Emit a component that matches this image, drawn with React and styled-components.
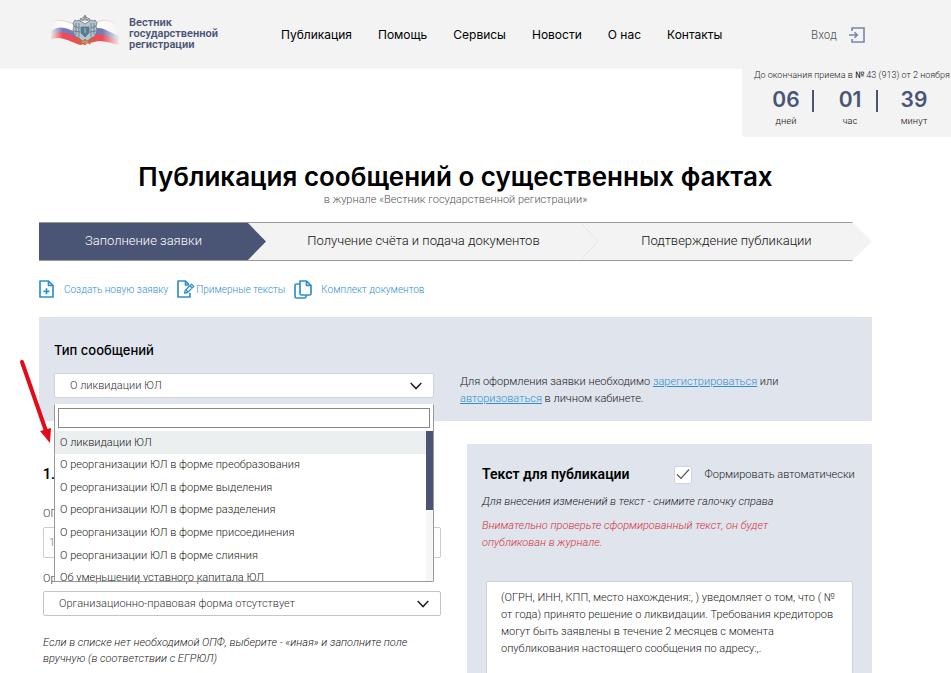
import React from 'react';
import styled, { createGlobalStyle, css } from 'styled-components';

const sans = 'Roboto, "Liberation Sans", sans-serif';
const inter = 'Inter, "Liberation Sans", sans-serif';
const navy = '#4a5475';
const blue = '#2f8fce';
const panel = '#dfe4ed';

const GlobalStyle = createGlobalStyle`
  *, *::before, *::after { box-sizing: border-box; }
  body {
    margin: 0;
    background: #fff;
    color: #222;
    font: 300 11px/17px ${sans};
    overflow: hidden;
  }
  h1, h2, p, ul { margin: 0; padding: 0; }
  button, input, select, textarea { font: inherit; color: inherit; }
`;

const Page = styled.div`
  position: relative;
`;

const Header = styled.header`
  display: flex;
  align-items: center;
  height: 69px;
  padding: 0 86px 2px 50px;
  background: #f3f3f3;
`;

const Brand = styled.a`
  display: flex;
  align-items: center;
  gap: 9px;
  width: 231px;
  color: ${navy};
  font: 600 11px/11px ${sans};
  text-decoration: none;

  > svg { margin-bottom: 4px; }
`;

const BrandName = styled.span`
  width: 96px;
`;

const Nav = styled.nav`
  display: flex;
  gap: 26px;
  padding-top: 2px;
`;

const NavLink = styled.a`
  color: #000;
  font: 400 12px/20px ${inter};
  text-decoration: none;
`;

const Login = styled.a`
  display: flex;
  align-items: center;
  gap: 12px;
  margin-left: auto;
  padding-top: 2px;
  color: #555;
  font: 300 11px/16px ${inter};
  text-decoration: none;
`;

const Countdown = styled.aside`
  width: 209px;
  height: 68px;
  margin-left: auto;
  padding-left: 12px;
  border-radius: 0 0 0 4px;
  background: #f3f3f3;
  font-size: 9px;
  line-height: 12px;
  white-space: nowrap;
`;

const Units = styled.div`
  display: flex;
  margin-top: 8px;
`;

const Unit = styled.div`
  flex: 0 0 64px;
  position: relative;
  text-align: center;
  font: 300 9px/14px ${inter};

  & + &::before {
    content: '';
    position: absolute;
    left: -6px;
    top: 1px;
    width: 2px;
    height: 22px;
    background: ${navy};
  }
`;

const UnitValue = styled.strong`
  display: block;
  margin-bottom: 3px;
  color: ${navy};
  font: 600 21px/22px ${inter};
`;

const Main = styled.main`
  padding: 24px 79px 0 39px;
`;

const Title = styled.h1`
  color: #000;
  text-align: center;
  font: 600 26px/32px ${inter};
  white-space: nowrap;
`;

const Subtitle = styled.p`
  color: #555;
  text-align: center;
  line-height: 14px;
`;

const Steps = styled.div`
  display: flex;
  height: 39px;
  margin-top: 15px;
  border: solid #999;
  border-width: 1px 0;
  background: #f3f3f3;
  clip-path: polygon(0 0, calc(100% - 20px) 0, 100% 50%, calc(100% - 20px) 100%, 0 100%);
`;

const Step = styled.button`
  display: flex;
  align-items: center;
  justify-content: center;
  position: relative;
  flex: ${(p) => p.$share} 1 0;
  padding: 0 18px 1px 0;
  border: 0;
  background: none;
  color: #111;
  font: 300 13px/20px ${sans};
  ${(p) =>
    p.$active &&
    css`
      background: ${navy};
      color: #fff;
      clip-path: polygon(0 0, calc(100% - 18px) 0, 100% 50%, calc(100% - 18px) 100%, 0 100%);
    `}
`;

const StepEdge = styled.svg`
  position: absolute;
  right: 0;
  top: 0;
`;

const Actions = styled.div`
  display: flex;
  align-items: center;
  height: 24px;
  margin-top: 16px;
`;

const Action = styled.a`
  display: flex;
  align-items: center;
  gap: ${(p) => p.$gap}px;
  margin-right: 9px;
  color: ${blue};
  font-size: 10px;
  text-decoration: none;
`;

const TypePanel = styled.section`
  display: grid;
  grid-template-columns: 380fr 397fr;
  column-gap: 26px;
  align-items: start;
  height: 104px;
  margin-top: 16px;
  padding: 23px 15px 0;
  background: ${panel};
`;

const Field = styled.div`
  position: relative;
`;

const FieldTitle = styled.label`
  display: block;
  margin-bottom: 13px;
  color: #000;
  font: 500 13px/20px ${inter};
`;

const SelectWrap = styled.div`
  display: grid;
  align-items: center;

  > * { grid-area: 1 / 1; }
  > svg { justify-self: end; margin-right: 12px; pointer-events: none; }
`;

const Select = styled.select`
  appearance: none;
  width: 100%;
  height: 25px;
  padding: 0 15px;
  border: 1px solid ${(p) => (p.$plain ? '#c4c4c4' : '#d0d3da')};
  border-radius: 2px;
  background: #fff;
  color: #333;
`;

const Hint = styled.p`
  align-self: end;
  padding-bottom: 14px;
`;

const InlineLink = styled.a`
  color: ${blue};
`;

const Dropdown = styled.div`
  position: absolute;
  z-index: 2;
  top: 64px;
  left: 0;
  right: 0;
  border: 1px solid #999;
  border-top-color: #fff;
  border-radius: 0 0 2px 2px;
  background: #fff;
`;

const Search = styled.input`
  display: block;
  width: calc(100% - 6px);
  height: 20px;
  margin: 3px;
  border: 1px solid #888;
  background: #fff;
`;

const ListArea = styled.div`
  display: flex;
  height: 150px;
`;

const Options = styled.ul`
  flex: 1;
  display: grid;
  grid-template-rows: repeat(7, 1fr);
  height: 158px;
  clip-path: inset(0 0 7px 0);
  list-style: none;
`;

const Option = styled.li`
  display: flex;
  align-items: center;
  padding-left: 5px;
  background: ${(p) => (p.$current ? '#eceff0' : 'transparent')};
  color: #222;
`;

const Track = styled.div`
  width: 7px;
  background: #f6f6f6;
`;

const Thumb = styled.div`
  height: 79px;
  background: ${navy};
`;

const Columns = styled.div`
  display: grid;
  grid-template-columns: 402fr 405fr;
  column-gap: 26px;
  margin-top: 23px;
`;

const FormColumn = styled.section`
  padding: 20px 0 0 4px;
`;

const SectionTitle = styled.h2`
  color: #000;
  font: 600 14px/20px ${sans};
`;

const Label = styled.label`
  display: block;
  margin: ${(p) => (p.$first ? '21px 0 5px' : '12px 0 4px')};
  color: #333;
`;

const TextInput = styled.input`
  display: block;
  width: 100%;
  height: 31px;
  padding: 0 5px;
  border: 1px solid #ccc;
  border-radius: 2px;
  color: #777;
`;

const Note = styled.p`
  margin-top: 19px;
  line-height: 16px;
  font-style: italic;
`;

const TextPanel = styled.section`
  padding: 20px 15px 0;
  background: ${panel};
`;

const TextHead = styled.div`
  display: flex;
  align-items: center;
  gap: 44px;
`;

const CheckLabel = styled.label`
  display: flex;
  align-items: center;
  gap: 13px;
  white-space: nowrap;
`;

const CheckBox = styled.span`
  display: grid;
  place-items: center;
  > * { grid-area: 1 / 1; }
  > svg { pointer-events: none; }
`;

const Check = styled.input`
  appearance: none;
  width: 18px;
  height: 18px;
  margin: 2px 0 0;
  border: 1px solid #cfd4dd;
  border-radius: 2px;
  background: #fff;
`;

const Remark = styled.p`
  margin-top: ${(p) => (p.$alert ? 7 : 9)}px;
  max-width: 320px;
  color: ${(p) => (p.$alert ? '#d4303c' : '#222')};
  font-style: italic;
`;

const Message = styled.textarea`
  display: block;
  width: calc(100% - 8px);
  height: 120px;
  margin: 30px 4px 0;
  padding: 7px 14px;
  border: 1px solid #ccd1da;
  border-radius: 2px;
  background: #fff;
  resize: none;
  overflow: hidden;
`;

const Arrow = styled.svg`
  position: absolute;
  z-index: 3;
  left: 16px;
  top: 356px;
  pointer-events: none;
`;

const Emblem = () => (
  <svg width="70" height="34" viewBox="0 0 70 34" aria-hidden="true">
    <defs>
      <linearGradient id="fade" x1="0" x2="1" y1="0" y2="0">
        <stop offset="0" stopColor="#fff" stopOpacity="0" />
        <stop offset=".18" stopColor="#fff" />
        <stop offset=".75" stopColor="#fff" />
        <stop offset="1" stopColor="#fff" stopOpacity="0" />
      </linearGradient>
      <mask id="ends"><rect width="70" height="34" fill="url(#fade)" /></mask>
    </defs>
    <g mask="url(#ends)">
      <path d="M1 7C10 3 18 7 26 10L46 9C52 4 60 4 69 11V22C60 18 54 12 46 14L26 19C18 15 10 11 1 17Z" fill="#fcfcfc" />
      <path d="M1 7C10 3 18 7 26 10M46 8C52 4 60 4 69 11" fill="none" stroke="#edc4ae" strokeWidth=".8" />
      <path d="M1 16C10 9 18 14 28 18L44 14C52 10 60 18 69 21V27L44 21 28 25C18 21 10 15 1 22Z" fill="#777bb9" />
      <path d="M1 21C10 13 18 20 30 23L44 20C52 17 60 23 69 26V30C60 28 52 24 44 27L30 30C18 26 10 20 1 25Z" fill="#f04a55" />
    </g>
    <g stroke="#596b76" strokeWidth=".7" fill="#b4c5ce">
      <path d="M35 9 32 7 29 5 27 6 25 5 23 8 24 11 23 15 24 19 26 22 29 23 32 26H38L41 23 44 22 46 19 47 15 46 11 47 8 45 5 43 6 41 5 38 7Z" />
      <path d="M26 8V20M29 8V22M44 8V20M41 8V22M24 11 29 13M46 11 41 13M24 16 30 17M46 16 40 17" fill="none" />
      <path d="M31 12H39V18L35 22 31 18Z" fill="#4f7f9a" />
      <path d="M30 6 31 3 33 6M37 6 39 3 40 6M33 5V2H37V5Z" fill="#d4cbb8" />
    </g>
    <path d="M35 0V4M34 1H36" stroke="#6c706a" strokeWidth=".8" />
    <path d="M29 23 28 27M32 25 30 29M35 24V30M38 25 40 29M41 23 43 27" stroke="#b8743a" strokeWidth="2" />
    <path d="M32 27H38M35 13V18" stroke="#e2c69b" strokeWidth=".8" />
  </svg>
);

const Chevron = () => (
  <svg width="12" height="8" viewBox="0 0 12 8" fill="none" stroke="#222" strokeWidth="1.5" aria-hidden="true">
    <path d="M.7 1 6 6.6 11.3 1" />
  </svg>
);

const NewIcon = () => (
  <svg width="15" height="18" viewBox="0 0 15 18" fill="none" stroke={blue} strokeWidth="1.7" strokeLinejoin="round" aria-hidden="true">
    <path d="M1 1H9.5L14 5.5V17H1ZM9.5 1V5.5H14M4.5 11.3H10.5M7.5 8.3V14.3" />
  </svg>
);

const EditIcon = () => (
  <svg width="18" height="18" viewBox="0 0 18 18" fill="none" stroke={blue} strokeWidth="1.7" strokeLinejoin="round" aria-hidden="true">
    <path d="M13 13V17H1V1H8.5L12 4.5M8.5 1V5H12" />
    <path d="M7.5 13.2 8.3 10.2 14.5 4.2 16.8 6.4 10.5 12.5ZM9.2 10 11.2 12M13 5.8 15.2 8" strokeWidth="1.3" />
  </svg>
);

const CopyIcon = () => (
  <svg width="18" height="19" viewBox="0 0 18 19" fill="none" stroke={blue} strokeWidth="1.7" strokeLinejoin="round" aria-hidden="true">
    <path d="M6 1H12.5L17 5.5V13.5Q17 15 15.5 15H7.5Q6 15 6 13.5ZM12.5 1V5.5H17M6 4H2.5Q1 4 1 5.5V16.5Q1 18 2.5 18H10.5Q12 18 12 16.5V15" />
  </svg>
);

const nav = ['Публикация', 'Помощь', 'Сервисы', 'Новости', 'О нас', 'Контакты'];
const units = [['06', 'дней'], ['01', 'час'], ['39', 'минут']];
const types = [
  'О ликвидации ЮЛ',
  'О реорганизации ЮЛ в форме преобразования',
  'О реорганизации ЮЛ в форме выделения',
  'О реорганизации ЮЛ в форме разделения',
  'О реорганизации ЮЛ в форме присоединения',
  'О реорганизации ЮЛ в форме слияния',
  'Об уменьшении уставного капитала ЮЛ',
];
const message =
  '(ОГРН, ИНН, КПП, место нахождения:, ) уведомляет о том, что ( № от года) принято решение о ликвидации. Требования кредиторов могут быть заявлены в течение 2 месяцев с момента опубликования настоящего сообщения по адресу:,.';

export default function App() {
  return (
    <Page>
      <GlobalStyle />
      <Header>
        <Brand href="#">
          <Emblem />
          <BrandName>Вестник государственной регистрации</BrandName>
        </Brand>
        <Nav>
          {nav.map((item) => <NavLink key={item} href="#">{item}</NavLink>)}
        </Nav>
        <Login href="#">
          Вход
          <svg width="16" height="16" viewBox="0 0 16 16" fill="none" stroke="#7488a8" strokeWidth="1.6" aria-hidden="true">
            <path d="M3 4V1H15V15H3V12M0 8H8M5.5 5.2 8.3 8 5.5 10.8" />
          </svg>
        </Login>
      </Header>
      <Countdown>
        До окончания приема в <b>№</b> 43 (913) от 2 ноября
        <Units>
          {units.map(([value, name]) => (
            <Unit key={name}><UnitValue>{value}</UnitValue>{name}</Unit>
          ))}
        </Units>
      </Countdown>
      <Main>
        <Title>Публикация сообщений о существенных фактах</Title>
        <Subtitle>в журнале «Вестник государственной регистрации»</Subtitle>
        <Steps>
          <Step type="button" $share={209} $active>Заполнение заявки</Step>
          <Step type="button" $share={315}>
            Получение счёта и подача документов
            <StepEdge width="19" height="37" viewBox="0 0 19 37" fill="none" stroke="#e5e5e5" aria-hidden="true">
              <path d="M1 0 18 18.5 1 37" />
            </StepEdge>
          </Step>
          <Step type="button" $share={255}>Подтверждение публикации</Step>
        </Steps>
        <Actions>
          <Action href="#" $gap={10}><NewIcon />Создать новую заявку</Action>
          <Action href="#" $gap={1}><EditIcon />Примерные тексты</Action>
          <Action href="#" $gap={9}><CopyIcon />Комплект документов</Action>
        </Actions>
        <TypePanel>
          <Field>
            <FieldTitle htmlFor="type">Тип сообщений</FieldTitle>
            <SelectWrap>
              <Select id="type" defaultValue={types[0]}>
                {types.map((t) => <option key={t}>{t}</option>)}
              </Select>
              <Chevron />
            </SelectWrap>
            <Dropdown>
              <Search type="text" aria-label="Поиск" />
              <ListArea>
                <Options role="listbox" aria-label="Тип сообщений">
                  {types.map((t, i) => (
                    <Option key={t} role="option" aria-selected={i === 0} $current={i === 0}>{t}</Option>
                  ))}
                </Options>
                <Track><Thumb /></Track>
              </ListArea>
            </Dropdown>
          </Field>
          <Hint>
            Для оформления заявки необходимо <InlineLink href="#">зарегистрироваться</InlineLink> или<br />
            <InlineLink href="#">авторизоваться</InlineLink> в личном кабинете.
          </Hint>
        </TypePanel>
        <Columns>
          <FormColumn>
            <SectionTitle>1.</SectionTitle>
            <Label htmlFor="ogrn" $first>ОГРН</Label>
            <TextInput id="ogrn" type="text" defaultValue="1" />
            <Label htmlFor="opf">Организационно-правовая форма</Label>
            <SelectWrap>
              <Select id="opf" $plain>
                <option>Организационно-правовая форма отсутствует</option>
              </Select>
              <Chevron />
            </SelectWrap>
            <Note>
              Если в списке нет необходимой ОПФ, выберите - «иная» и заполните поле вручную (в соответствии с ЕГРЮЛ)
            </Note>
          </FormColumn>
          <TextPanel>
            <TextHead>
              <SectionTitle id="text-title">Текст для публикации</SectionTitle>
              <CheckLabel>
                <CheckBox>
                  <Check type="checkbox" defaultChecked />
                  <svg width="14" height="12" viewBox="0 0 14 12" fill="none" stroke="#555" strokeWidth="1.2" aria-hidden="true">
                    <path d="M1 6.5 5 10.5 13 1.5" />
                  </svg>
                </CheckBox>
                Формировать автоматически
              </CheckLabel>
            </TextHead>
            <Remark>Для внесения изменений в текст - снимите галочку справа</Remark>
            <Remark $alert>Внимательно проверьте сформированный текст, он будет опубликован в журнале.</Remark>
            <Message aria-labelledby="text-title" defaultValue={message} />
          </TextPanel>
        </Columns>
      </Main>
      <Arrow width="40" height="90" viewBox="0 0 40 90" aria-hidden="true">
        <path d="M6 6 30 75" stroke="#e30b17" strokeWidth="4" strokeLinecap="round" />
        <path d="M24 75 35 72 34 87Z" fill="#e30b17" />
      </Arrow>
    </Page>
  );
}
